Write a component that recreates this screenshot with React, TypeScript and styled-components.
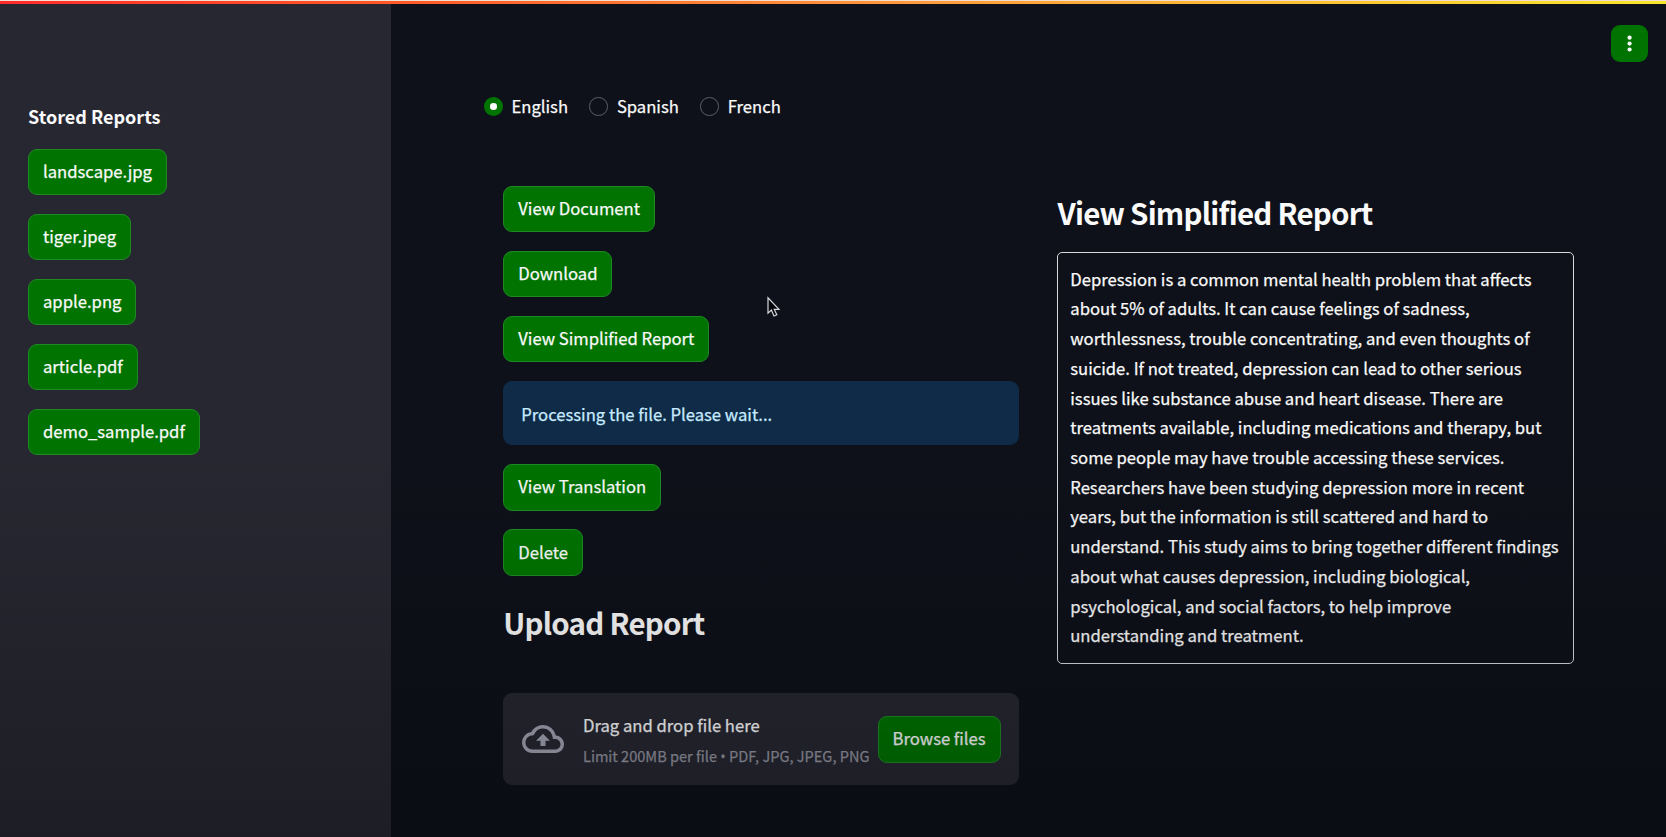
import React, { useState } from "react";
import styled, { createGlobalStyle } from "styled-components";

const GlobalStyle = createGlobalStyle`
  *, *::before, *::after { box-sizing: border-box; }
  body {
    margin: 0;
    overflow: hidden;
    background: #0e1119;
    color: #fafafa;
    font-family: "Noto Sans CJK SC", "Noto Sans", sans-serif;
    font-size: 16.65px;
    line-height: 29.7px;
    -webkit-text-stroke: 0.25px currentColor;
  }
  h1, h2, p { margin: 0; }
`;

const Page = styled.div`
  position: relative;
  display: flex;
  width: 100%;
  height: 837px;
  overflow: hidden;
`;

const Decoration = styled.div`
  position: absolute;
  inset: 0 0 auto 0;
  height: 4px;
  border-top: 1px solid #f3ddd0;
  background: linear-gradient(90deg, #ff2b2b, #ff5526 22%, #ff9a3c 55%, #f8e62a);
`;

const BottomShade = styled.div`
  position: absolute;
  inset: auto 0 0 0;
  height: 400px;
  pointer-events: none;
  background: linear-gradient(
    rgba(0, 0, 8, 0),
    rgba(0, 0, 8, 0.05) 30%,
    rgba(0, 0, 8, 0.17) 70%,
    rgba(0, 0, 8, 0.25)
  );
`;

const Sidebar = styled.aside`
  flex: none;
  width: 390.6px;
  padding: 100.5px 28px 0;
  background: #272731;
`;

const SidebarTitle = styled.h2`
  font-size: 18px;
  font-weight: 700;
  line-height: 30px;
  margin-bottom: 18px;
  -webkit-text-stroke: 0;
`;

const Stack = styled.div`
  display: flex;
  flex-direction: column;
  align-items: flex-start;
  gap: 18.6px;
`;

const Button = styled.button`
  flex: none;
  display: inline-flex;
  align-items: center;
  height: 46.5px;
  padding: 0 14px;
  border: 1px solid #1f8a24;
  border-radius: 9px;
  background: #007300;
  color: #fafafa;
  font: inherit;
  white-space: nowrap;
`;

const Main = styled.main`
  flex: 1;
  min-width: 0;
  padding: 92px 92px 0 93.4px;
`;

const RadioGroup = styled.div`
  display: flex;
  gap: 21.4px;
  height: 30px;
  margin-bottom: 63.6px;
`;

const RadioLabel = styled.label`
  display: flex;
  align-items: center;
  gap: 8.9px;
  cursor: pointer;
`;

const RadioInput = styled.input`
  appearance: none;
  margin: 0 0 1px;
  width: 18.6px;
  height: 18.6px;
  border: 1.2px solid #5c5e66;
  border-radius: 50%;
  &:checked {
    border: 6px solid #007300;
    background: #fafafa;
  }
`;

const Columns = styled.div`
  display: grid;
  grid-template-columns: 515.5px 516.2px;
  column-gap: 38.7px;
  margin-left: 19.3px;
`;

const Notice = styled.div`
  width: 100%;
  height: 64.6px;
  padding: 18.8px 18px;
  border-radius: 9px;
  background: #0f2b47;
  color: #c7ebff;
`;

const Heading = styled.h1<{ $top: number; $bottom: number }>`
  font-size: 29.5px;
  font-weight: 700;
  line-height: 40px;
  letter-spacing: -0.77px;
  margin-top: ${(p) => p.$top}px;
  margin-bottom: ${(p) => p.$bottom}px;
  -webkit-text-stroke: 0;
`;

const Dropzone = styled.section`
  display: flex;
  align-items: center;
  height: 92px;
  padding: 0 18.2px 0 18.4px;
  border-radius: 9px;
  background: #262730;
`;

const CloudIcon = styled.svg`
  flex: none;
  width: 42px;
  height: 42px;
  margin-right: 19.3px;
  fill: #a3a4b2;
`;

const DropText = styled.div`
  flex: 1;
  padding-top: 4px;
  white-space: nowrap;
`;

const Limit = styled.p`
  color: #93949f;
  font-size: 14.57px;
`;

const Bullet = styled.span`
  font-family: "Open Sans", sans-serif;
`;

const Report = styled.div`
  height: 412.6px;
  padding: 12px 11.8px 0;
  border: 1px solid #d8d9de;
  border-radius: 5px;
`;

const MenuButton = styled.button`
  position: absolute;
  top: 25px;
  right: 17.7px;
  width: 37.4px;
  height: 37.4px;
  padding: 0;
  border: 0;
  border-radius: 9px;
  background: #007300;
  svg { display: block; fill: #fafafa; }
`;

const Pointer = styled.svg`
  position: absolute;
  left: 766px;
  top: 296px;
`;

const reports = ["landscape.jpg", "tiger.jpeg", "apple.png", "article.pdf", "demo_sample.pdf"];
const languages = ["English", "Spanish", "French"];
const reportLines = [
  "Depression is a common mental health problem that affects",
  "about 5% of adults. It can cause feelings of sadness,",
  "worthlessness, trouble concentrating, and even thoughts of",
  "suicide. If not treated, depression can lead to other serious",
  "issues like substance abuse and heart disease. There are",
  "treatments available, including medications and therapy, but",
  "some people may have trouble accessing these services.",
  "Researchers have been studying depression more in recent",
  "years, but the information is still scattered and hard to",
  "understand. This study aims to bring together different findings",
  "about what causes depression, including biological,",
  "psychological, and social factors, to help improve",
  "understanding and treatment.",
];

const ReportLine = styled.p`
  white-space: nowrap;
`;

export default function App() {
  const [language, setLanguage] = useState("English");
  return (
    <>
      <GlobalStyle />
      <Page>
        <Sidebar>
          <SidebarTitle>Stored Reports</SidebarTitle>
          <Stack>
            {reports.map((name) => (
              <Button key={name}>{name}</Button>
            ))}
          </Stack>
        </Sidebar>
        <Main>
          <RadioGroup>
            {languages.map((name) => (
              <RadioLabel key={name}>
                <RadioInput
                  type="radio"
                  name="language"
                  checked={language === name}
                  onChange={() => setLanguage(name)}
                />
                {name}
              </RadioLabel>
            ))}
          </RadioGroup>
          <Columns>
            <div>
              <Stack>
                <Button>View Document</Button>
                <Button>Download</Button>
                <Button>View Simplified Report</Button>
                <Notice>Processing the file. Please wait...</Notice>
                <Button>View Translation</Button>
                <Button>Delete</Button>
              </Stack>
              <Heading $top={26} $bottom={51.6}>Upload Report</Heading>
              <Dropzone>
                <CloudIcon viewBox="0 0 24 24">
                  <path d="M19.35 10.04A7.49 7.49 0 0 0 12 4C9.11 4 6.6 5.64 5.35 8.04A5.994 5.994 0 0 0 0 14c0 3.31 2.69 6 6 6h13c2.76 0 5-2.24 5-5 0-2.64-2.05-4.78-4.65-4.96zM19 18H6c-2.21 0-4-1.79-4-4 0-2.05 1.53-3.76 3.56-3.97l1.07-.11.5-.95A5.469 5.469 0 0 1 12 6c2.62 0 4.88 1.86 5.39 4.43l.3 1.5 1.53.11A2.98 2.98 0 0 1 22 15c0 1.65-1.35 3-3 3zM8 13h2.55v3h2.9v-3H16l-4-4z" />
                </CloudIcon>
                <DropText>
                  <p>Drag and drop file here</p>
                  <Limit>
                    Limit 200MB per file <Bullet>•</Bullet> PDF, JPG, JPEG, PNG
                  </Limit>
                </DropText>
                <Button>Browse files</Button>
              </Dropzone>
            </div>
            <div>
              <Heading $top={6.4} $bottom={19.8}>View Simplified Report</Heading>
              <Report>
                {reportLines.map((line) => (
                  <ReportLine key={line}>{line}</ReportLine>
                ))}
              </Report>
            </div>
          </Columns>
        </Main>
        <MenuButton aria-label="Menu">
          <svg width="37.4" height="37.4" viewBox="0 0 37.4 37.4">
            <circle cx="18.6" cy="12.7" r="2.1" />
            <circle cx="18.6" cy="18.6" r="2.1" />
            <circle cx="18.6" cy="24.5" r="2.1" />
          </svg>
        </MenuButton>
        <Decoration />
        <BottomShade />
        <Pointer width="16" height="23" viewBox="0 0 16 23">
          <path
            d="M2 1.8V17.2l3.4-3.2 2.6 6 2.8-1.2-2.5-5.4h4.7z"
            fill="#05060a"
            stroke="#d8d8de"
            strokeWidth="1.2"
          />
        </Pointer>
      </Page>
    </>
  );
}
